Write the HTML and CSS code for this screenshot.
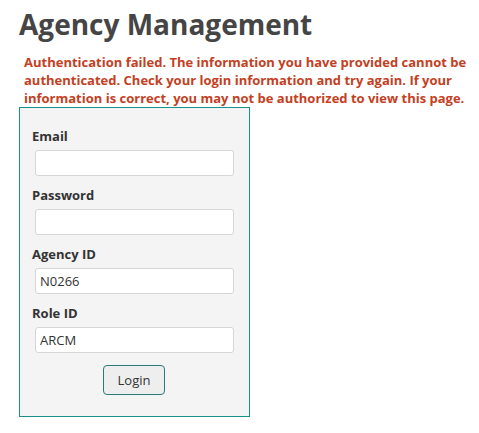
FILE: index.html
```html
<!DOCTYPE html>
<html lang="en">
<head>
  <meta charset="UTF-8">
  <title>Agency Management</title>
  <link rel="stylesheet" href="styles.css">
</head>
<body>
  <div class="page">
    <h1>Agency Management</h1>
    <p class="error">Authentication failed. The information you have provided cannot be authenticated. Check your login information and try again. If your information is correct, you may not be authorized to view this page.</p>

    <form class="login-box" onsubmit="return false;">
      <div class="field">
        <label for="email">Email</label>
        <input type="text" id="email">
      </div>
      <div class="field">
        <label for="password">Password</label>
        <input type="password" id="password">
      </div>
      <div class="field">
        <label for="agency">Agency ID</label>
        <input type="text" id="agency" value="N0266">
      </div>
      <div class="field">
        <label for="role">Role ID</label>
        <input type="text" id="role" value="ARCM">
      </div>
      <div class="actions">
        <button type="submit" class="login-btn">Login</button>
      </div>
    </form>
  </div>
</body>
</html>
```

FILE: styles.css
```css
body {
  margin: 0;
  padding: 0;
  font-family: 'Open Sans', sans-serif;
  background: #ffffff;
  color: #333333;
}
.page {
  padding: 7px 10px 0 19px;
}
h1 {
  margin: 0 0 12px 0;
  font-size: 28px;
  line-height: 34px;
  font-weight: 700;
  color: #454545;
}
.error {
  margin: 0;
  padding-left: 5px;
  font-size: 13px;
  line-height: 18px;
  font-weight: 700;
  color: #c4401f;
}
.login-box {
  width: 204px;
  padding: 19px 13px 21px 12px;
  background: #f4f4f4;
  border: 1px solid #18908d;
}
.field {
  margin-bottom: 10px;
}
.field label {
  display: block;
  font-size: 13px;
  line-height: 18px;
  font-weight: 700;
  color: #333333;
  margin-bottom: 5px;
}
.field input {
  display: block;
  box-sizing: border-box;
  width: 199px;
  height: 26px;
  margin-left: 3px;
  padding: 0 4px;
  font-family: 'Open Sans', sans-serif;
  font-size: 13px;
  color: #333333;
  background: #ffffff;
  border: 1px solid #d6d6d6;
  border-radius: 3px;
  outline: none;
}
.actions {
  text-align: center;
  padding-top: 2px;
}
.login-btn {
  box-sizing: border-box;
  width: 62px;
  height: 30px;
  font-family: 'Open Sans', sans-serif;
  font-size: 13px;
  color: #333333;
  background: #eeeeee;
  border: 1px solid #2b7a78;
  border-radius: 4px;
  cursor: pointer;
}
```
